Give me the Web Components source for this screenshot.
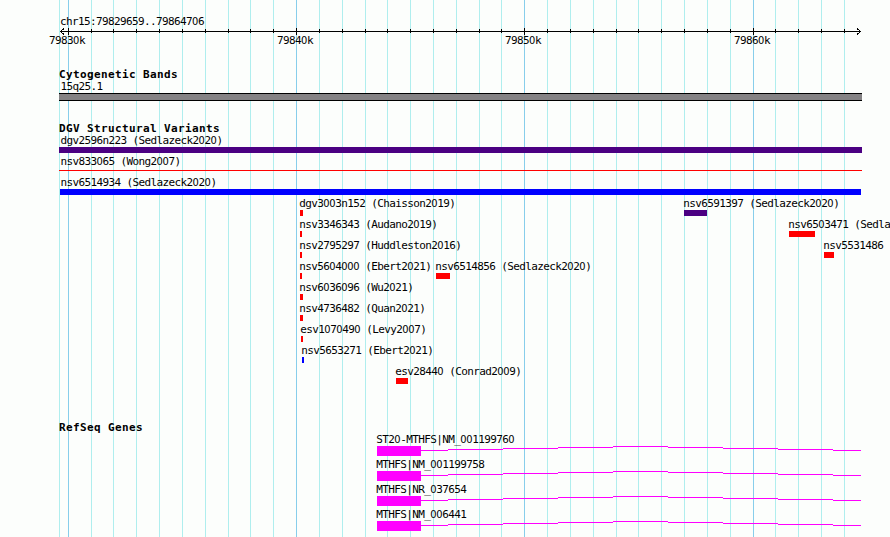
<!DOCTYPE html>
<html lang="en">
<head>
    <meta charset="utf-8">
    <title>chr15:79829659..79864706</title>
    <style>
        body {
            margin: 0;
            background: #fcfefc;
            color: #000;
            font: 11px/13px "DejaVu Sans Mono", monospace;
            letter-spacing: -0.622px;
            overflow: hidden;
        }
    </style>
</head>
<body>
    <genome-browser>
        <genome-ruler>chr15:79829659..79864706</genome-ruler>

        <genome-track name="Cytogenetic Bands" style="margin-top: 21px">
            <track-row><track-feature start="59" width="803" kind="band" label="15q25.1"></track-feature></track-row>
        </genome-track>

        <genome-track name="DGV Structural Variants" style="margin-top: 21px">
            <track-row><track-feature start="59" width="803" color="#4b0082" label="dgv2596n223 (Sedlazeck2020)"></track-feature></track-row>
            <track-row><track-feature start="59" width="803" color="#f00" kind="line" label="nsv833065 (Wong2007)"></track-feature></track-row>
            <track-row><track-feature start="60" width="801" color="#00f" label="nsv6514934 (Sedlazeck2020)"></track-feature></track-row>
            <track-row>
                <track-feature start="300" width="3" label="dgv3003n152 (Chaisson2019)"></track-feature>
                <track-feature start="684" width="23" color="#4b0082" label="nsv6591397 (Sedlazeck2020)"></track-feature>
            </track-row>
            <track-row>
                <track-feature start="300" width="2" label="nsv3346343 (Audano2019)"></track-feature>
                <track-feature start="789" width="26" label="nsv6503471 (Sedla"></track-feature>
            </track-row>
            <track-row>
                <track-feature start="300" width="2" label="nsv2795297 (Huddleston2016)"></track-feature>
                <track-feature start="824" width="10" label="nsv5531486"></track-feature>
            </track-row>
            <track-row>
                <track-feature start="300" width="2" label="nsv5604000 (Ebert2021)"></track-feature>
                <track-feature start="436" width="14" label="nsv6514856 (Sedlazeck2020)"></track-feature>
            </track-row>
            <track-row><track-feature start="300" width="3" label="nsv6036096 (Wu2021)"></track-feature></track-row>
            <track-row><track-feature start="300" width="3" label="nsv4736482 (Quan2021)"></track-feature></track-row>
            <track-row><track-feature start="301" width="2" label="esv1070490 (Levy2007)"></track-feature></track-row>
            <track-row><track-feature start="302" width="2" color="#00f" label="nsv5653271 (Ebert2021)"></track-feature></track-row>
            <track-row><track-feature start="396" width="12" label="esv28440 (Conrad2009)"></track-feature></track-row>
        </genome-track>

        <genome-track name="RefSeq Genes" style="margin-top: 35px">
            <track-row size="25"><track-feature start="377" width="44" kind="gene" label="ST20-MTHFS|NM_001199760"></track-feature></track-row>
            <track-row size="25"><track-feature start="377" width="44" kind="gene" label="MTHFS|NM_001199758"></track-feature></track-row>
            <track-row size="25"><track-feature start="377" width="44" kind="gene" label="MTHFS|NR_037654"></track-feature></track-row>
            <track-row size="25"><track-feature start="377" width="44" kind="gene" label="MTHFS|NM_006441"></track-feature></track-row>
        </genome-track>
    </genome-browser>

    <script>
        const minorTicks = [91, 113, 136, 159, 182, 205, 228, 250, 273, 319, 342, 365, 387, 410, 433,
            456, 479, 501, 547, 570, 593, 616, 638, 661, 684, 707, 730, 775, 798, 821, 844];
        const majorTicks = [68, 296, 524, 753];

        // The default mono zero is slashed, so zeros get the plain condensed one
        const plainZeros = text => text.replace(/0+/g, '<span class="zero">$&</span>');
        const zeroStyle = `
                    .zero {
                        font-family: "DejaVu Sans Condensed", "DejaVu Sans", sans-serif;
                        font-stretch: condensed;
                        letter-spacing: -0.3px;
                    }`;

        class GenomeBrowser extends HTMLElement {
            constructor() {
                super();
                this.attachShadow({mode: 'open'});
                const line = (x, color) => `<rect x="${x}" width="1" height="537" fill="${color}"/>`;
                this.shadowRoot.innerHTML = `<style>
                    :host {
                        display: grid;
                        width: 890px;
                        height: 537px;
                        overflow: hidden;
                    }

                    svg, main {
                        grid-area: 1 / 1;
                    }

                    main {
                        display: flex;
                        flex-direction: column;
                        padding-top: 15px;
                        min-width: 0;
                    }
                </style>
                <svg width="890" height="537" shape-rendering="crispEdges">
                    ${[59, ...minorTicks].map(x => line(x, '#afeeee')).join('')}
                    ${majorTicks.map(x => line(x, '#87ceeb')).join('')}
                </svg>
                <main><slot></slot></main>`;
            }
        }

        class GenomeRuler extends HTMLElement {
            constructor() {
                super();
                this.attachShadow({mode: 'open'});
                this.shadowRoot.innerHTML = `<style>
                    :host {
                        display: flex;
                        flex-direction: column;
                        height: 32px;
                    }

                    .region {
                        padding-left: 60px;
                    }

                    svg {
                        display: block;
                        height: 6px;
                        overflow: visible;
                        flex: none;
                    }

                    .labels {
                        display: grid;
                    }

                    .labels div {
                        grid-area: 1 / 1;
                    }
                    ${zeroStyle}
                </style>
                <div class="region">${plainZeros(this.textContent)}</div>
                <svg width="890" height="6" shape-rendering="crispEdges">
                    <rect x="60" y="3" width="801" height="1"/>
                    ${minorTicks.map(x => `<rect x="${x}" y="1" width="1" height="4"/>`).join('')}
                    ${majorTicks.map(x => `<rect x="${x}" width="1" height="7"/>`).join('')}
                    <path d="M64 .5L60.5 3.5L64 6.5M857 .5L860.5 3.5L857 6.5" fill="none" stroke="#000"/>
                </svg>
                <div class="labels">
                    ${majorTicks.map((x, i) => `<div style="margin-left: ${x - 19}px">${plainZeros(`798${i + 3}0k`)}</div>`).join('')}
                </div>`;
            }
        }

        class GenomeTrack extends HTMLElement {
            constructor() {
                super();
                this.attachShadow({mode: 'open'});
                this.shadowRoot.innerHTML = `<style>
                    :host {
                        display: flex;
                        flex-direction: column;
                        flex: none;
                    }

                    h3 {
                        height: 12px;
                        margin: 0 0 0 59px;
                        font: bold 11px/13px "DejaVu Sans Mono", monospace;
                        letter-spacing: 0.378px;
                    }
                </style>
                <h3></h3>
                <slot></slot>`;
                this.shadowRoot.querySelector('h3').textContent = this.getAttribute('name');
            }
        }

        class TrackRow extends HTMLElement {
            constructor() {
                super();
                this.attachShadow({mode: 'open'});
                this.shadowRoot.innerHTML = `<style>
                    :host {
                        display: grid;
                        height: ${this.getAttribute('size') || 21}px;
                    }

                    ::slotted(*) {
                        grid-area: 1 / 1;
                    }
                </style>
                <slot></slot>`;
            }
        }

        class TrackFeature extends HTMLElement {
            constructor() {
                super();
                this.attachShadow({mode: 'open'});
                const start = Number(this.getAttribute('start'));
                const width = this.getAttribute('width');
                const color = this.getAttribute('color') || '#f00';
                const kind = this.getAttribute('kind') || 'box';
                // Labels never start left of the panel edge
                const labelShift = Math.max(60.4 - start, -0.8);
                this.shadowRoot.innerHTML = `<style>
                    :host {
                        display: block;
                        margin-left: ${start}px;
                    }

                    .label {
                        height: 13px;
                        margin-left: ${labelShift}px;
                        white-space: pre;
                    }
                    ${zeroStyle}

                    .glyph {
                        width: ${width}px;
                        height: 6px;
                        background: ${color};
                    }

                    .band {
                        box-sizing: border-box;
                        height: 8px;
                        background: #848284;
                        border: solid #000;
                        border-width: 1px 0;
                    }

                    .line {
                        height: 1px;
                        margin-top: 2px;
                    }

                    .gene {
                        height: 10px;
                        background: #f0f;
                    }

                    svg {
                        display: block;
                        margin-left: ${width}px;
                    }
                </style>
                <div class="label">${plainZeros(this.getAttribute('label'))}</div>
                <div class="glyph ${kind}">${kind === 'gene' ? this.intron() : ''}</div>`;
            }

            // Shallow hat line, stepping one pixel at a time
            intron() {
                const steps = [[0, 27, 4], [27, 55, 3], [82, 55, 2], [137, 55, 1], [192, 55, 0],
                    [247, 55, 1], [302, 55, 2], [357, 55, 3], [412, 28, 4]];
                return `<svg width="440" height="10" fill="#f0f" shape-rendering="crispEdges">
                    ${steps.map(([x, w, y]) => `<rect x="${x}" y="${y}" width="${w}" height="1"/>`).join('')}
                </svg>`;
            }
        }

        window.customElements.define('genome-browser', GenomeBrowser);
        window.customElements.define('genome-ruler', GenomeRuler);
        window.customElements.define('genome-track', GenomeTrack);
        window.customElements.define('track-row', TrackRow);
        window.customElements.define('track-feature', TrackFeature);
    </script>
</body>
</html>
